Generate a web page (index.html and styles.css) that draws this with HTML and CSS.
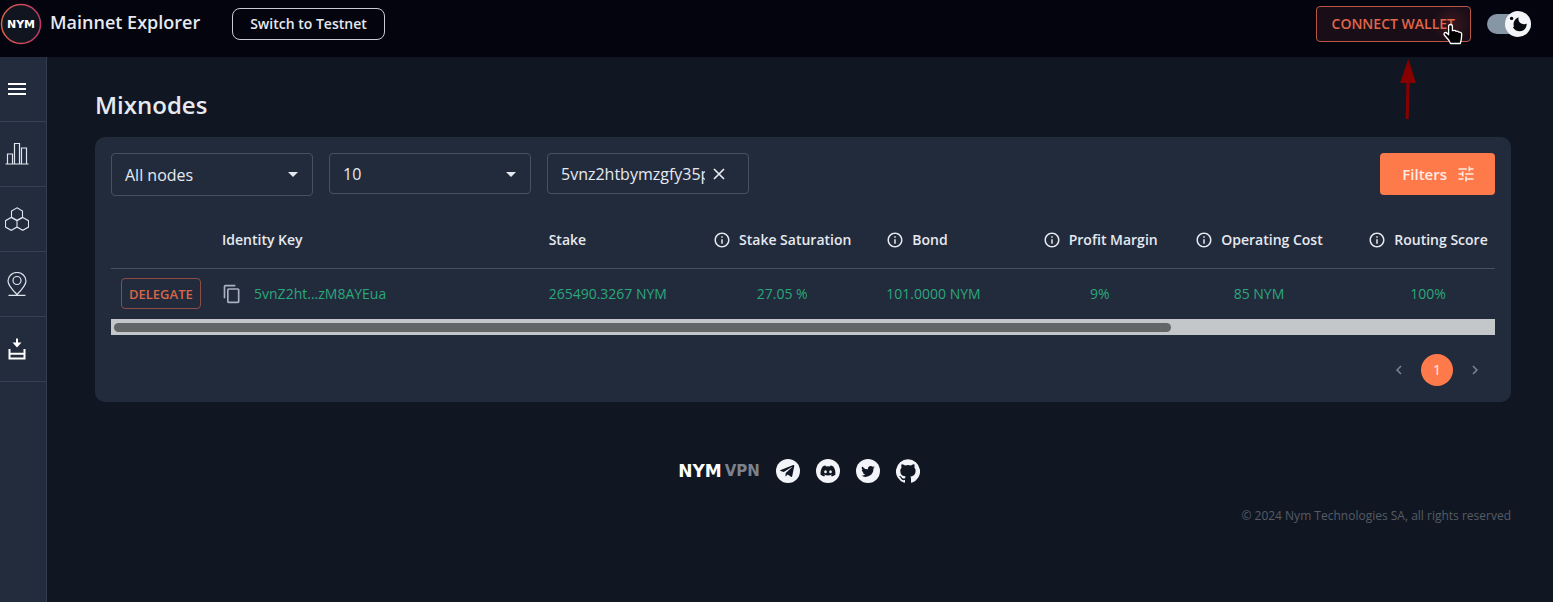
FILE: index.html
```html
<!DOCTYPE html>
<html lang="en">
<head>
<meta charset="utf-8">
<title>Mainnet Explorer</title>
<meta name="viewport" content="width=device-width, initial-scale=1">
<link rel="stylesheet" href="styles.css">
</head>
<body>
<svg class="defs" aria-hidden="true">
  <symbol id="info" viewBox="0 0 24 24"><path fill="currentColor" d="M11 7h2v2h-2zm0 4h2v6h-2zm1-9C6.480 2 2 6.480 2 12s4.480 10 10 10 10-4.480 10-10S17.520 2 12 2zm0 18c-4.410 0-8-3.590-8-8s3.590-8 8-8 8 3.590 8 8-3.590 8-8 8z"/></symbol>
  <symbol id="caret" viewBox="0 0 24 24"><path fill="currentColor" d="M7 10l5 5 5-5z"/></symbol>
</svg>
<header class="topbar">
  <svg class="logo" viewBox="0 0 42 42" role="img" aria-label="NYM">
    <defs><linearGradient id="ring" x1="0" y1="0" x2="1" y2="0"><stop offset="0" stop-color="#d8604a"/><stop offset="1" stop-color="#c0366a"/></linearGradient></defs>
    <circle cx="21" cy="21" r="19.500" fill="#10151f" stroke="url(#ring)" stroke-width="1.500"/>
    <text class="logo-text" x="21" y="25" text-anchor="middle">NYM</text>
  </svg>
  <span class="brand">Mainnet Explorer</span>
  <button class="btn-switch" type="button">Switch to Testnet</button>
  <div class="top-actions">
    <div class="wallet">
      <button class="btn-wallet" type="button">CONNECT WALLET</button>
      <svg class="pointer" viewBox="0 0 20 22" aria-hidden="true"><path fill="#000" stroke="#fff" stroke-width="1.300" stroke-linejoin="round" d="M7.500 1.500c1.200 0 1.900.8 1.900 1.900v4.300c2-.6 3.200-.2 3.500.6 1.500-.4 2.700 0 3 .9 1.500-.2 2.800.5 2.800 2l-.4 5.300-1 4H7.500l-1.700-3.300L1.300 12c-.5-.9-.2-1.900.6-2.300.9-.4 1.700 0 2.200.6l1.500 1.500V3.400c0-1.100.7-1.900 1.900-1.900z"/></svg>
      <svg class="arrow" viewBox="0 0 16 60" aria-hidden="true"><path d="M8 20L7.200 60" stroke="#860000" stroke-width="3"/><path d="M8.300 0L16 24H0z" fill="#860000"/></svg>
    </div>
    <label class="toggle">
      <input type="checkbox" checked aria-label="Dark mode">
      <svg class="toggle-thumb" viewBox="0 0 26 26" aria-hidden="true"><circle cx="13" cy="13" r="13" fill="#f2f4f7"/><path fill="#05070f" d="M13.700 6.300c-.6 1.500-.4 3.400.7 4.800 1.600 2 4.300 2.500 7.300 1.600 0 4.500-3 7.600-7 7.600-3 0-5.600-1.500-6.900-4.300l1.200-.3c-.6-1.600-.6-3.300 0-5 .9-2.200 2.500-3.600 4.700-4.400z"/><circle cx="6.600" cy="7.400" r="1.700" fill="#05070f"/></svg>
    </label>
  </div>
</header>
<div class="shell">
  <nav class="sidebar" aria-label="Main">
    <button class="side-item" type="button" aria-label="Menu"><svg viewBox="0 0 24 24"><path fill="#fff" d="M3 18h18v-2H3v2zm0-5h18v-2H3v2zm0-7v2h18V6H3z"/></svg></button>
    <a class="side-item" href="#" aria-label="Overview"><svg viewBox="0 0 24 24" fill="none" stroke="#dfe5ee" stroke-width="1.200"><path d="M.5 22h23M2.500 22V12h5v10M9.500 22V1.500h5V22M16.500 22V6h5v16"/></svg></a>
    <a class="side-item" href="#" aria-label="Network Components"><svg viewBox="0 0 24 24" fill="none" stroke="#dfe5ee" stroke-width="1.100"><path d="M12 .8l5.500 3.200v6.200L12 13.300l-5.500-3.100V4zM6.200 10.500l5.800 3.200v6.400l-5.800 3.200-5.700-3.200v-6.400zM17.800 10.500l5.700 3.200v6.400l-5.700 3.200-5.800-3.200v-6.400z"/></svg></a>
    <a class="side-item" href="#" aria-label="Nodemap"><svg viewBox="0 0 24 24" fill="none" stroke="#dfe5ee" stroke-width="1.200"><path d="M12 22.500C8 18.500 3 13.500 3 9a9 8.500 0 0 1 18 0c0 4.500-5 9.500-9 13.500zM3.500 23.300h17"/><circle cx="12" cy="8.500" r="4"/></svg></a>
    <a class="side-item" href="#" aria-label="Delegations"><svg viewBox="0 0 24 24" fill="none" stroke="#fff" stroke-width="2"><path d="M5.500 13H4.500v8.500h15V13h-1M4 16.800h16M12 1.500v6"/><path d="M7.500 5.500h9L12 10.500z" fill="#fff" stroke="none"/></svg></a>
  </nav>
  <main class="content">
    <h1 class="title">Mixnodes</h1>
    <section class="card">
      <div class="toolbar">
        <div class="field field-tall">
          <select aria-label="Node status"><option>All nodes</option></select>
          <svg class="caret"><use href="#caret"/></svg>
        </div>
        <div class="field">
          <select aria-label="Page size"><option>10</option></select>
          <svg class="caret"><use href="#caret"/></svg>
        </div>
        <div class="field search">
          <input type="text" aria-label="Search" value="5vnz2htbymzgfy35pzm8ayeua">
          <button type="button" aria-label="Clear search"><svg viewBox="0 0 12 12"><path d="M1 1l10 10M11 1L1 11" stroke="currentColor" stroke-width="1.700"/></svg></button>
        </div>
        <button class="btn-filters" type="button">Filters
          <svg viewBox="0 0 24 24"><path fill="currentColor" d="M3 17v2h6v-2H3zM3 5v2h10V5H3zm10 16v-2h8v-2h-8v-2h-2v6h2zM7 9v2H3v2h4v2h2V9H7zm14 4v-2H11v2h10zm-6-4h2V7h4V5h-4V3h-2v6z"/></svg>
        </button>
      </div>
      <table class="grid">
        <colgroup><col class="c-action"><col class="c-key"><col class="c-stake"><col class="c-sat"><col class="c-bond"><col class="c-margin"><col class="c-cost"><col class="c-score"></colgroup>
        <thead><tr>
          <th aria-label="Actions"></th>
          <th>Identity Key</th>
          <th>Stake</th>
          <th class="mid"><span class="head"><svg><use href="#info"/></svg>Stake Saturation</span></th>
          <th><span class="head"><svg><use href="#info"/></svg>Bond</span></th>
          <th class="mid"><span class="head"><svg><use href="#info"/></svg>Profit Margin</span></th>
          <th class="mid"><span class="head"><svg><use href="#info"/></svg>Operating Cost</span></th>
          <th class="mid last"><span class="head"><svg><use href="#info"/></svg>Routing Score</span></th>
        </tr></thead>
        <tbody><tr>
          <td><button class="btn-delegate" type="button">DELEGATE</button></td>
          <td><span class="key"><button class="copy" type="button" aria-label="Copy identity key"><svg viewBox="0 0 24 24"><path fill="currentColor" d="M16 1H4c-1.100 0-2 .9-2 2v14h2V3h12V1zm3 4H8c-1.100 0-2 .9-2 2v14c0 1.100.9 2 2 2h11c1.100 0 2-.9 2-2V7c0-1.100-.9-2-2-2zm0 16H8V7h11v14z"/></svg></button><a href="#">5vnZ2ht...zM8AYEua</a></span></td>
          <td><a href="#">265490.3267 NYM</a></td>
          <td class="mid"><a href="#">27.05 %</a></td>
          <td><a href="#">101.0000 NYM</a></td>
          <td class="mid"><a href="#">9%</a></td>
          <td class="mid"><a href="#">85 NYM</a></td>
          <td class="mid last"><a href="#">100%</a></td>
        </tr></tbody>
      </table>
      <div class="scrollbar"><div class="scroll-thumb"></div></div>
      <div class="pager">
        <button type="button" aria-label="Previous page"><svg viewBox="0 0 24 24"><path fill="currentColor" d="M15.400 7.400L14 6l-6 6 6 6 1.400-1.400L10.800 12z"/></svg></button>
        <button class="current" type="button">1</button>
        <button type="button" aria-label="Next page"><svg viewBox="0 0 24 24"><path fill="currentColor" d="M10 6L8.600 7.400l4.600 4.600-4.600 4.600L10 18l6-6z"/></svg></button>
      </div>
    </section>
    <footer class="footer">
      <div class="links">
        <a class="vpn" href="#"><span class="vpn-nym">NYM</span><span class="vpn-vpn">VPN</span></a>
        <a class="social" href="#" aria-label="Telegram"><svg viewBox="0 0 24 24"><circle cx="12" cy="12" r="12" fill="#f2f4f9"/><path fill="#111722" d="M18.300 6.800l-2.100 10.500c-.2.700-.6.900-1.200.5l-3.300-2.400-1.600 1.500c-.2.200-.3.300-.7.300l.3-3.300 6-5.500c.3-.2-.1-.4-.4-.2L7.800 12.900l-3.200-1c-.7-.2-.7-.7.100-1l12.600-4.900c.6-.2 1.200.2 1 .8z"/></svg></a>
        <a class="social" href="#" aria-label="Discord"><svg viewBox="0 0 24 24"><circle cx="12" cy="12" r="12" fill="#f2f4f9"/><path fill="#111722" d="M17.300 7.500A12 12 0 0 0 14.400 6.600l-.4.800a11 11 0 0 0-4 0l-.4-.8a12 12 0 0 0-2.900.9C4.800 10.300 4.300 13 4.600 15.700A12 12 0 0 0 8.200 17.500l.8-1.300-1.200-.6.300-.2a8.600 8.600 0 0 0 7.800 0l.3.200-1.200.6.800 1.300a12 12 0 0 0 3.600-1.800c.3-3.200-.5-5.800-2.100-8.200z"/><ellipse cx="9.500" cy="12.700" rx="1.300" ry="1.500" fill="#f2f4f9"/><ellipse cx="14.500" cy="12.700" rx="1.300" ry="1.500" fill="#f2f4f9"/></svg></a>
        <a class="social" href="#" aria-label="Twitter"><svg viewBox="0 0 24 24"><circle cx="12" cy="12" r="12" fill="#f2f4f9"/><path fill="#111722" d="M18.800 8.200a5.600 5.600 0 0 1-1.600.4 2.800 2.800 0 0 0 1.200-1.500 5.600 5.600 0 0 1-1.800.7 2.800 2.800 0 0 0-4.700 2.500 7.900 7.900 0 0 1-5.700-2.900 2.800 2.800 0 0 0 .8 3.700 2.800 2.800 0 0 1-1.200-.4c0 1.400 1 2.500 2.200 2.800a2.800 2.800 0 0 1-1.200 0 2.800 2.800 0 0 0 2.600 2 5.600 5.600 0 0 1-4.200 1.100 7.900 7.900 0 0 0 12.200-7 5.600 5.600 0 0 0 1.400-1.400z"/></svg></a>
        <a class="social" href="#" aria-label="GitHub"><svg viewBox="0 0 24 24"><path fill="#f2f4f9" d="M12 .3a12 12 0 0 0-3.800 23.400c.6.100.8-.3.800-.6v-2c-3.300.7-4-1.600-4-1.600-.6-1.400-1.400-1.800-1.400-1.800-1-.7.100-.7.100-.7 1.200 0 1.900 1.200 1.900 1.200 1 1.800 2.800 1.300 3.500 1 0-.8.400-1.300.7-1.600-2.700-.3-5.500-1.300-5.500-6 0-1.200.5-2.300 1.300-3.100-.2-.4-.6-1.600 0-3.200 0 0 1-.3 3.400 1.200a11.500 11.500 0 0 1 6 0c2.300-1.500 3.300-1.200 3.300-1.200.6 1.600.2 2.800 0 3.200.9.800 1.300 1.900 1.300 3.200 0 4.600-2.800 5.600-5.500 5.900.5.400.9 1 .9 2.200v3.300c0 .3.100.7.800.6A12 12 0 0 0 12 .3"/></svg></a>
      </div>
      <p class="copyright">© 2024 Nym Technologies SA, all rights reserved</p>
    </footer>
  </main>
</div>
</body>
</html>
```
FILE: styles.css
```css
* { box-sizing: border-box; }
body {
  margin: 0;
  min-height: 100vh;
  display: flex;
  flex-direction: column;
  background: #111722;
  color: #e6e9f0;
  font: 14px/20px "Open Sans", "Noto Sans", sans-serif;
}
button, input, select { font: inherit; color: inherit; }
button { cursor: pointer; }
a { color: inherit; text-decoration: none; }
svg { display: block; }
.defs { position: absolute; width: 0; height: 0; }

.topbar {
  display: flex;
  align-items: center;
  height: 57px;
  padding: 0 22px 9px 0;
  background: #03040e;
}
.logo { width: 42px; height: 42px; }
.logo-text { font: bold 11px "DejaVu Sans", sans-serif; fill: #fff; }
.brand { margin: 0 32px 4px 8px; font-size: 18px; line-height: 24px; font-weight: 600; }
.btn-switch {
  height: 32px;
  padding: 0 17px;
  border: 1px solid #c9ccd6;
  border-radius: 8px;
  background: transparent;
  font-weight: 600;
}
.top-actions { display: flex; align-items: center; gap: 16px; margin-left: auto; }
.wallet { position: relative; }
.btn-wallet {
  display: block;
  height: 36px;
  padding: 0 15px;
  border: 1px solid #b95646;
  border-radius: 4px;
  background: radial-gradient(circle at 88% 50%, #3a1820 0, #190d17 20px);
  color: #e0664a;
  font-weight: 600;
}
.pointer { position: absolute; right: 8px; top: 17px; width: 20px; height: 22px; }
.arrow { position: absolute; left: 84px; top: 53px; width: 16px; height: 60px; }
.toggle { position: relative; display: block; }
.toggle input {
  display: block;
  appearance: none;
  width: 44px;
  height: 20px;
  margin: 0;
  border-radius: 10px;
  background: #8796a5;
}
.toggle-thumb { position: absolute; right: 0; top: -3px; width: 26px; height: 26px; }

.shell { display: flex; flex: 1; }
.sidebar { width: 47px; flex: none; background: #222c3d; border-right: 1px solid #323e50; }
.side-item {
  display: flex;
  align-items: center;
  width: 100%;
  height: 65px;
  padding: 0 0 0 5px;
  border: 0;
  border-bottom: 1px solid #354153;
  background: transparent;
}
.side-item svg { width: 24px; height: 24px; }

.content { flex: 1; min-width: 0; padding: 32px 42px 32px 48px; }
.title { margin: 0 0 16px; font-size: 24px; line-height: 32px; font-weight: 600; }
.card { padding: 16px; border-radius: 10px; background: #222b3c; }
.toolbar { display: flex; align-items: flex-start; gap: 16px; }
.field {
  position: relative;
  width: 202px;
  height: 41px;
  border: 1px solid #465162;
  border-radius: 4px;
  font-size: 16px;
}
.field-tall { height: 43px; }
.field select {
  appearance: none;
  width: 100%;
  height: 100%;
  padding: 0 40px 0 13px;
  border: 0;
  background: transparent;
}
.caret { position: absolute; right: 7px; top: 8px; width: 24px; height: 24px; pointer-events: none; }
.search { display: flex; align-items: center; padding: 0 15px 0 13px; }
.search input { flex: 1; min-width: 0; padding: 0; border: 0; background: transparent; }
.search button { padding: 8px; border: 0; background: transparent; }
.search svg { width: 12px; height: 12px; }
.btn-filters {
  display: flex;
  align-items: center;
  gap: 9px;
  height: 42px;
  margin-left: auto;
  padding: 0 19px 0 22px;
  border: 0;
  border-radius: 4px;
  background: #ff7a4b;
  color: #ffece4;
  font-size: 15px;
  font-weight: 600;
}
.btn-filters svg { width: 20px; height: 20px; }

.grid { width: 100%; margin-top: 16px; border-collapse: collapse; table-layout: fixed; }
.c-action { width: 7.3%; }
.c-key { width: 23.6%; }
.c-stake { width: 10.8%; }
.c-sat { width: 13.6%; }
.c-bond { width: 11.3%; }
.c-margin { width: 9.7%; }
.c-cost { width: 13.3%; }
.c-score { width: 10.4%; }
.grid th, .grid td { padding: 0 10px; text-align: left; white-space: nowrap; }
.grid th { height: 56px; border-bottom: 1px solid #465162; font-weight: 600; }
.grid td { height: 51px; color: #2ba77b; }
.grid .mid { text-align: center; }
.grid .last { padding: 0 7px 0 17px; }
.head { display: inline-flex; align-items: center; gap: 8px; vertical-align: middle; }
.head svg { width: 18px; height: 18px; }
.key { display: flex; align-items: center; gap: 12px; }
.copy { padding: 0; border: 0; background: transparent; color: #a9b1bf; }
.copy svg { width: 20px; height: 20px; }
.btn-delegate {
  display: block;
  height: 31px;
  padding: 0 7px;
  border: 1px solid #8e4c47;
  border-radius: 4px;
  background: transparent;
  color: #d7664a;
  font-size: 13px;
  font-weight: 600;
}
.scrollbar { height: 16px; padding: 4px 3px; background: #c3c7ca; }
.scroll-thumb { width: 76.7%; height: 9px; border-radius: 5px; background: #626667; }
.pager { display: flex; justify-content: flex-end; align-items: center; gap: 6px; padding: 19px 4px 0 0; }
.pager button {
  display: flex;
  align-items: center;
  justify-content: center;
  width: 32px;
  height: 32px;
  padding: 0;
  border: 0;
  border-radius: 50%;
  background: transparent;
  color: #7b8492;
}
.pager .current { background: #ff7a4b; color: #ffece4; }
.pager svg { width: 18px; height: 18px; }

.footer { padding-top: 57px; }
.links { display: flex; justify-content: center; align-items: center; gap: 16px; padding-right: 8px; }
.vpn { display: flex; align-items: center; gap: 3px; }
.vpn-nym { font: bold 17px/24px "DejaVu Sans", sans-serif; color: #fff; }
.vpn-vpn { font: bold 15px/24px "DejaVu Sans", sans-serif; color: #7c828d; }
.social svg { width: 24px; height: 24px; }
.copyright { margin: 23px 0 0; text-align: right; font-size: 12px; color: #555b67; }
```
